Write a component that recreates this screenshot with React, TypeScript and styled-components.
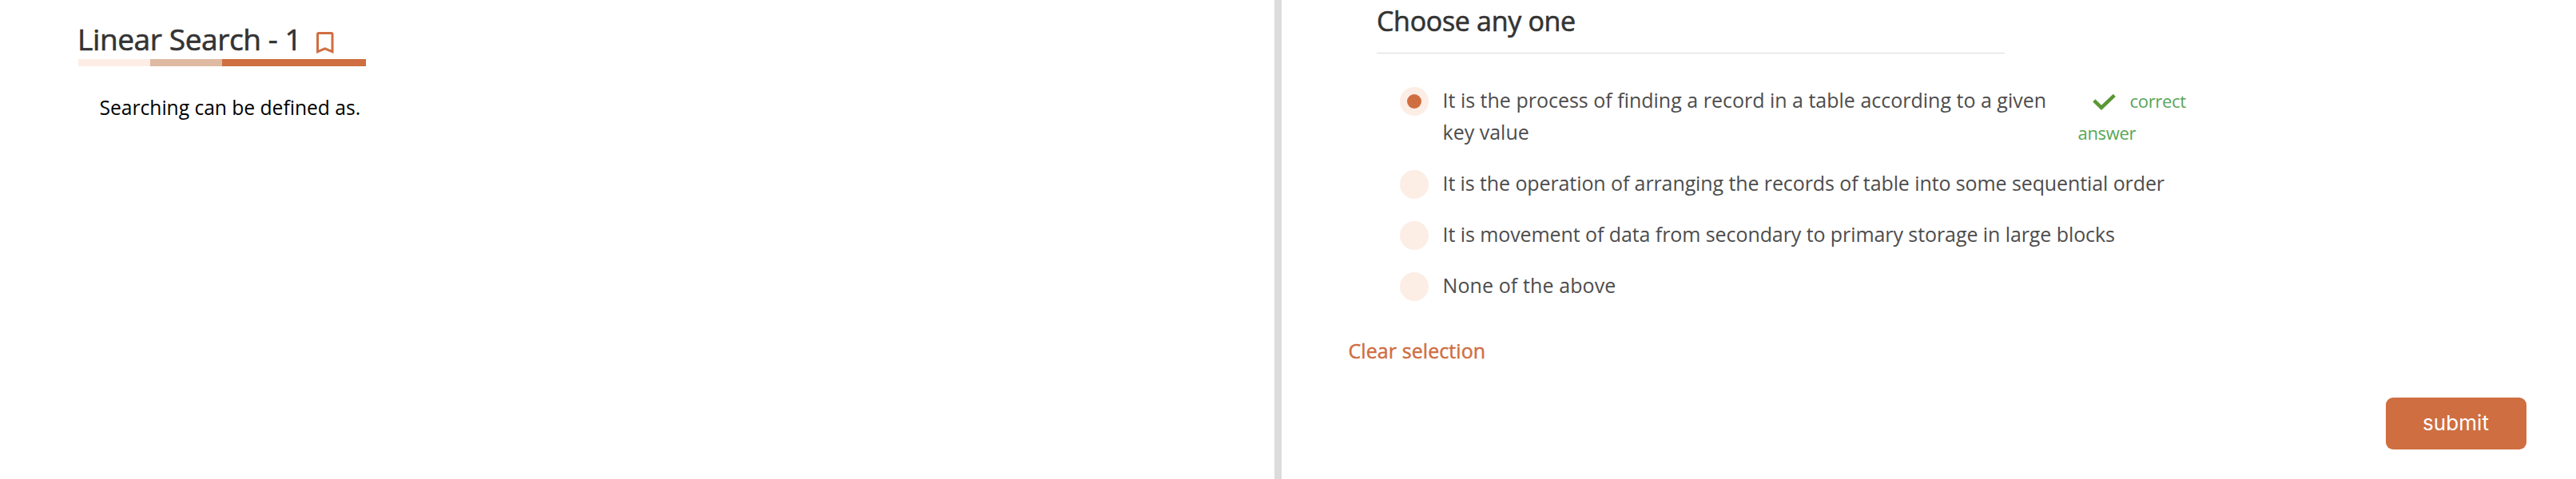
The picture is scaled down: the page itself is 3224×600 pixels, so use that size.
import React, { useState } from "react";
import styled, { createGlobalStyle } from "styled-components";

const accent = "#cf6e41";
const tint = "#fceee5";

const GlobalStyle = createGlobalStyle`
  * {
    box-sizing: border-box;
  }
  body {
    margin: 0;
    background: #fff;
    font-family: "Open Sans", "Noto Sans", sans-serif;
    font-size: 25px;
    line-height: 40px;
  }
`;

const Page = styled.main`
  display: flex;
  height: 600px;
  overflow: hidden;
`;

const QuestionPane = styled.section`
  width: 1595px;
  padding: 23px 0 0 98px;
`;

const Splitter = styled.div`
  width: 9px;
  background: #dcdcdc;
`;

const AnswerPane = styled.section`
  flex: 1;
  display: flex;
  flex-direction: column;
  align-items: flex-start;
  padding: 3px 62px 0 83.5px;
`;

const TitleRow = styled.header`
  display: flex;
  align-items: flex-start;
  width: 360px;
  height: 51px;
`;

const Title = styled.h1`
  width: 299px;
  margin: 0 0 0 -1px;
  color: #333;
  font-size: 37px;
  font-weight: 500;
  line-height: 51px;
  letter-spacing: -0.38px;
  white-space: nowrap;
  -webkit-text-stroke: 0.6px currentColor;
`;

const BookmarkButton = styled.button`
  display: flex;
  margin: 17px 0 0;
  padding: 0;
  border: 0;
  background: none;
  color: ${accent};
`;

const TitleBar = styled.div`
  display: flex;
  width: 360px;
  height: 9px;
`;

const BarSegment = styled.span<{ $grow: number; $color: string }>`
  flex: ${(p) => p.$grow};
  background: ${(p) => p.$color};
`;

const Prompt = styled.p`
  margin: 32px 0 0 26.5px;
  color: #000;
  font-size: 24.6px;
`;

const Heading = styled.h2`
  width: 786px;
  height: 64px;
  margin: 0 0 0 35.5px;
  border-bottom: 1px solid #dcdcdc;
  color: #333;
  font-size: 34px;
  font-weight: 500;
  line-height: 46px;
  letter-spacing: -0.32px;
  -webkit-text-stroke: 0.6px currentColor;
`;

const Options = styled.ul`
  display: flex;
  flex-direction: column;
  gap: 24px;
  margin: 38px 0 0 64.5px;
  padding: 0;
  list-style: none;
`;

const Option = styled.li`
  display: flex;
  align-items: flex-start;
`;

const Radio = styled.button`
  flex: none;
  display: grid;
  place-items: center;
  width: 36px;
  height: 36px;
  margin: 4px 17.5px 0 0;
  padding: 0;
  border: 0;
  border-radius: 50%;
  background: ${tint};
`;

const RadioDot = styled.span`
  width: 18px;
  height: 18px;
  border-radius: 50%;
  background: ${accent};
`;

const Label = styled.span<{ $spacing: number }>`
  max-width: 770px;
  color: #4d4d4d;
  letter-spacing: ${(p) => p.$spacing}px;
`;

const WideLabel = styled(Label)`
  max-width: none;
  white-space: nowrap;
`;

const Verdict = styled.span`
  width: 146px;
  margin: 1px 0 -1px 25px;
  color: #56a656;
  font-size: 22px;
  letter-spacing: -0.3px;
`;

const CheckIcon = styled.svg`
  margin: 0 17.5px -3px 18.5px;
`;

const ClearButton = styled.button`
  margin: 42px 0 0;
  padding: 0;
  border: 0;
  background: none;
  color: ${accent};
  font: 500 25px/40px "Open Sans", "Noto Sans", sans-serif;
  letter-spacing: 0.08px;
  -webkit-text-stroke: 0.45px currentColor;
`;

const SubmitButton = styled.button`
  align-self: flex-end;
  width: 176px;
  height: 65px;
  margin: 39px 0 0;
  padding: 0 1px 1px 0;
  border: 0;
  border-radius: 9px;
  background: ${accent};
  color: #fff;
  font: 400 26px/32px "Inter", sans-serif;
  letter-spacing: 0.1px;
`;

const options = [
  { text: "It is the process of finding a record in a table according to a given key value", spacing: 0, correct: true },
  { text: "It is the operation of arranging the records of table into some sequential order", spacing: -0.1 },
  { text: "It is movement of data from secondary to primary storage in large blocks", spacing: -0.08 },
  { text: "None of the above", spacing: 0.1 },
];

export default function App() {
  const [selected, setSelected] = useState(0);
  return (
    <>
      <GlobalStyle />
      <Page>
        <QuestionPane>
          <TitleRow>
            <Title>Linear Search - 1</Title>
            <BookmarkButton aria-label="Bookmark">
              <svg width="21.5" height="27" viewBox="0 0 21.5 27" fill="currentColor">
                <path
                  fillRule="evenodd"
                  d="M0 3Q0 0 3 0H18.5Q21.5 0 21.5 3V27L10.75 22.5L0 27ZM3 3V22.5L10.75 19.3L18.5 22.5V3Z"
                />
              </svg>
            </BookmarkButton>
          </TitleRow>
          <TitleBar>
            <BarSegment $grow={1} $color={tint} />
            <BarSegment $grow={1} $color="#dfbaa2" />
            <BarSegment $grow={2} $color={accent} />
          </TitleBar>
          <Prompt>Searching can be defined as.</Prompt>
        </QuestionPane>
        <Splitter />
        <AnswerPane>
          <Heading>Choose any one</Heading>
          <Options>
            {options.map((o, i) => {
              const Text = o.correct ? Label : WideLabel;
              return (
                <Option key={o.text}>
                  <Radio role="radio" aria-checked={selected === i} onClick={() => setSelected(i)}>
                    {selected === i && <RadioDot />}
                  </Radio>
                  <Text $spacing={o.spacing}>{o.text}</Text>
                  {o.correct && (
                    <Verdict>
                      <CheckIcon width="29" height="20" viewBox="0 0 29 20" fill="none">
                        <path d="M1.8 7.9L11 16.8L27.3 1.4" stroke="#5a9733" strokeWidth="4.5" />
                      </CheckIcon>
                      correct answer
                    </Verdict>
                  )}
                </Option>
              );
            })}
          </Options>
          <ClearButton onClick={() => setSelected(-1)}>Clear selection</ClearButton>
          <SubmitButton>submit</SubmitButton>
        </AnswerPane>
      </Page>
    </>
  );
}
